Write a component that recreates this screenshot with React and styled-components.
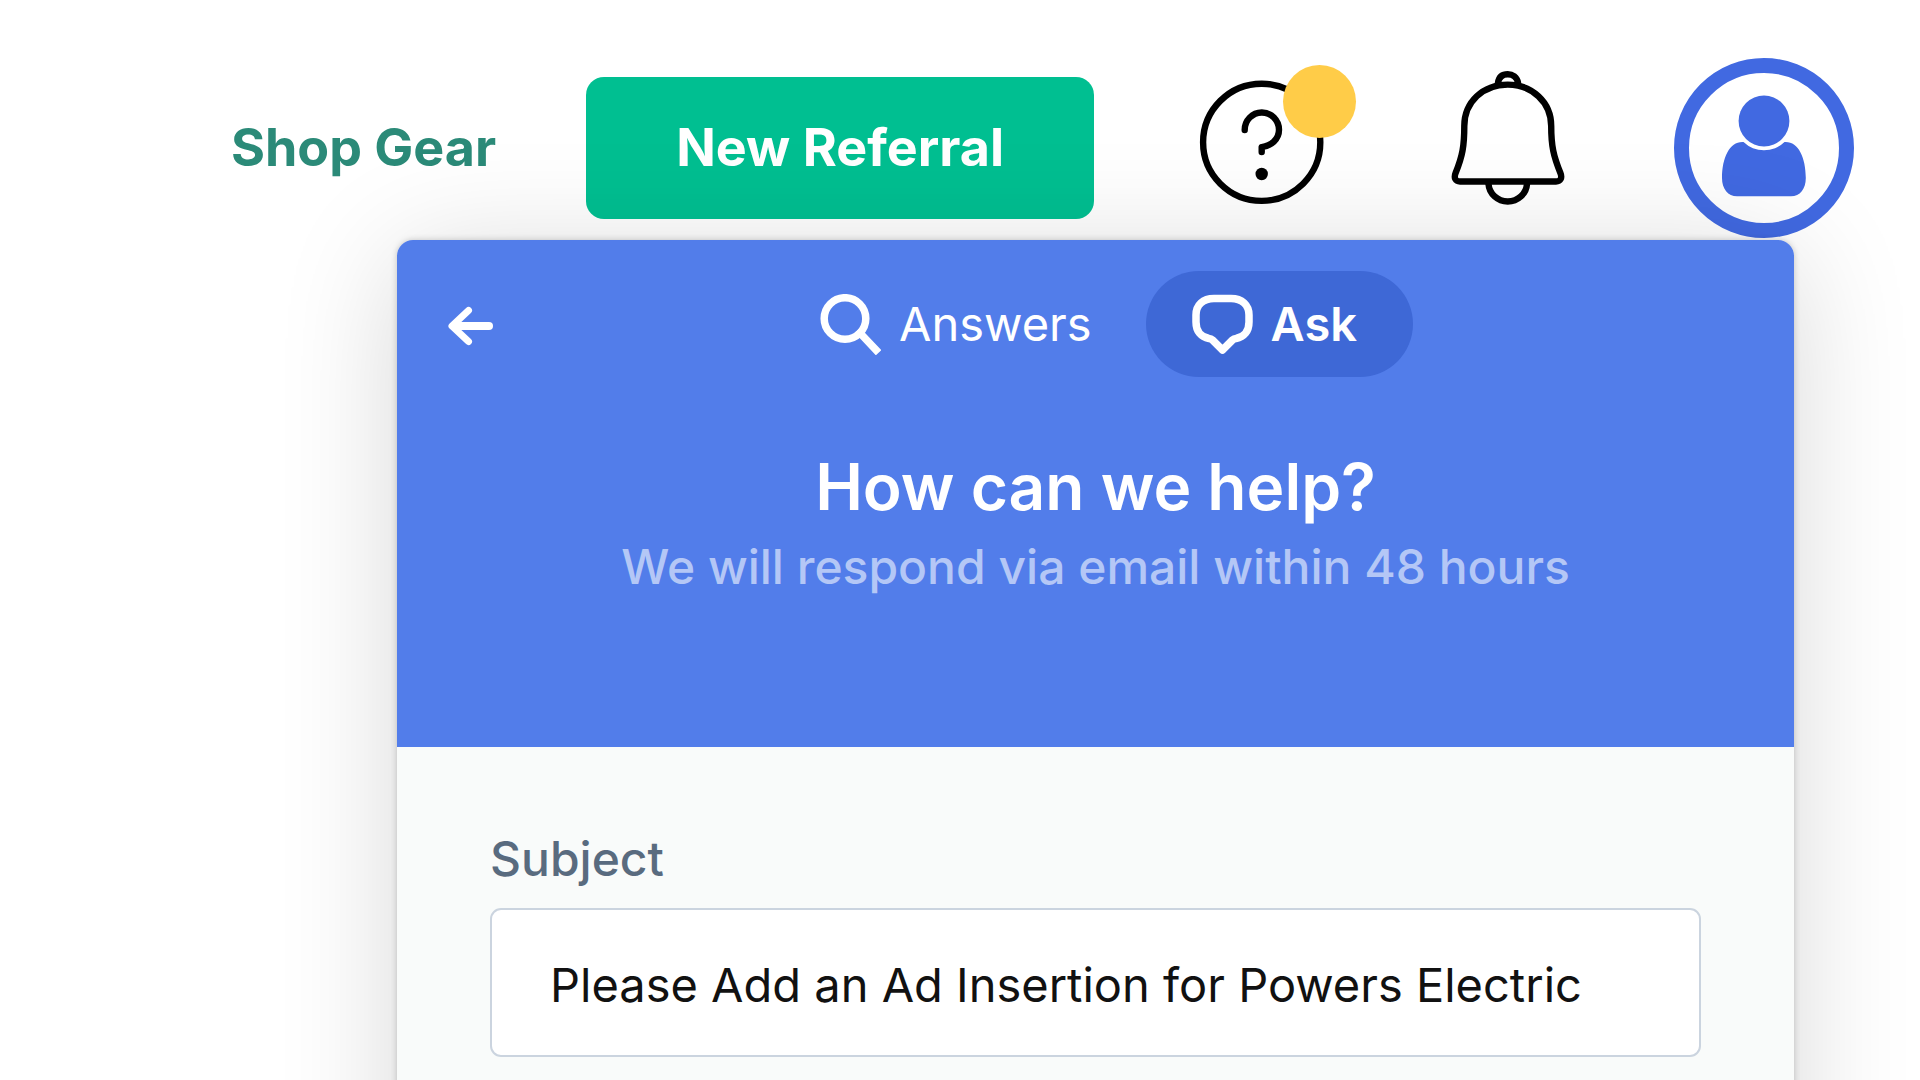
import React, { useState } from "react";
import styled, { createGlobalStyle } from "styled-components";

const GlobalStyle = createGlobalStyle`
  *, *::before, *::after { box-sizing: border-box; }
  body {
    margin: 0;
    background: #fff;
    font-family: Inter, "Liberation Sans", sans-serif;
  }
  button, input { font-family: inherit; }
`;

const Page = styled.div`
  height: 100vh;
  overflow: hidden;
  display: flex;
  flex-direction: column;
`;

const TopBar = styled.header`
  flex: none;
  display: flex;
  justify-content: flex-end;
  align-items: center;
  padding: 58px 66px 2px;
`;

const GearLink = styled.a`
  margin-right: 90px;
  color: #2b8a78;
  font-size: 52px;
  line-height: 64px;
  font-weight: 700;
  text-decoration: none;
  white-space: nowrap;
`;

const ReferralButton = styled.button`
  margin-right: 104px;
  height: 142px;
  padding: 0 90px;
  border: 0;
  border-radius: 18px;
  background: #00bf91;
  color: #fff;
  font-size: 52px;
  line-height: 64px;
  font-weight: 700;
  white-space: nowrap;
`;

const IconButton = styled.button`
  position: relative;
  flex: none;
  display: flex;
  margin-right: ${(p) => p.$after || 0}px;
  padding: 0;
  border: 0;
  background: none;
  color: ${(p) => p.$color || "#000"};
`;

const Badge = styled.span`
  position: absolute;
  top: 7px;
  right: 4px;
  width: 73px;
  height: 73px;
  border-radius: 50%;
  background: #ffcc48;
`;

const Panel = styled.section`
  position: relative;
  z-index: 1;
  flex: none;
  min-height: 100vh;
  margin: 0 126px 0 397px;
  border-radius: 16px;
  background: #f9fbfa;
  box-shadow: 0 0 6px rgba(0, 0, 0, 0.2), 0 16px 120px rgba(0, 0, 0, 0.16);
`;

const PanelHeader = styled.div`
  padding: 31px 48px 151px;
  border-radius: 16px 16px 0 0;
  background: #527dea;
  color: #fff;
  text-align: center;
`;

const NavRow = styled.nav`
  display: grid;
  grid-template-columns: 1fr auto 1fr;
  align-items: center;
`;

const BackButton = styled.button`
  justify-self: start;
  display: flex;
  padding: 0;
  border: 0;
  background: none;
  color: #fff;
`;

const Tabs = styled.div`
  display: flex;
  gap: 8px;
  padding-right: 4px;
`;

const Tab = styled.button`
  display: flex;
  align-items: center;
  gap: 18px;
  height: 106px;
  padding: 0 ${(p) => (p.$active ? 56 : 46)}px 0 46px;
  border: 0;
  border-radius: 53px;
  background: ${(p) => (p.$active ? "#3e68d6" : "transparent")};
  color: #fff;
  font-size: 47px;
  line-height: 58px;
  font-weight: ${(p) => (p.$active ? 600 : 400)};
`;

const Title = styled.h1`
  margin: 70px 0 0;
  font-size: 64px;
  line-height: 80px;
  font-weight: 600;
`;

const Subtitle = styled.p`
  margin: 11px 0 0;
  color: #b4c7f6;
  font-size: 48px;
  line-height: 58px;
  font-weight: 500;
`;

const Form = styled.form`
  display: flex;
  flex-direction: column;
  gap: 20px;
  padding: 83px 93px;
`;

const Label = styled.label`
  color: #596b7f;
  font-size: 48px;
  line-height: 58px;
  font-weight: 500;
`;

const TextInput = styled.input`
  width: 100%;
  height: 149px;
  padding: 4px 58px 0;
  border: 2px solid #cbd4df;
  border-radius: 11px;
  background: #fff;
  color: #111;
  font-size: 47px;
  outline: none;
`;

const HelpIcon = () => (
  <svg width="162" height="180" viewBox="0 0 162 180" fill="none" stroke="currentColor" strokeWidth="6.4" strokeLinecap="round" strokeLinejoin="round" aria-hidden="true">
    <circle cx="63.7" cy="84.3" r="58.6" />
    <path d="M46.7 72A17 17.3 0 0 1 81 71.8C81 81.5 73 87.8 63.7 89.1V94" />
    <circle cx="63.7" cy="116" r="6.2" fill="currentColor" stroke="none" />
  </svg>
);

const BellIcon = () => (
  <svg width="116" height="180" viewBox="0 0 116 180" fill="none" stroke="currentColor" strokeWidth="6.4" strokeLinejoin="round" aria-hidden="true">
    <path d="M57.7 26.6C33 26.6 14.3 44 14.3 68C14.3 88 12.5 98 5.6 115C3.6 120 5.5 123.5 10 123.5H106C110.5 123.5 112.4 120 110.4 115C103.5 98 101.2 88 101.2 68C101.2 44 82 26.6 57.7 26.6Z" />
    <path d="M48 27V24.8C49 18.8 53 16.3 57.7 16.3C62.5 16.3 67 18.8 68 24.8V27" />
    <path d="M38.5 124V126A19.3 18.8 0 0 0 77 126V124" />
  </svg>
);

const AvatarIcon = () => (
  <svg width="180" height="180" viewBox="0 0 180 180" fill="currentColor" aria-hidden="true">
    <circle cx="90" cy="90" r="82.5" fill="none" stroke="currentColor" strokeWidth="15" />
    <circle cx="90" cy="63" r="25.4" />
    <path d="M69.5 84A29.5 29.5 0 0 0 110.5 84C124 83 131.8 99 131.8 120C131.8 131 126 138.3 117 138.3H63C54 138.3 48 131 48 120C48 99 56 83 69.5 84Z" />
  </svg>
);

const ArrowIcon = () => (
  <svg width="52" height="46" viewBox="0 -2 52 46" fill="none" stroke="currentColor" strokeLinecap="round" strokeLinejoin="round" aria-hidden="true">
    <path d="M23.5 7.5L7 23L23.5 38.5" strokeWidth="7" />
    <path d="M10 23H44" strokeWidth="8" />
    <path d="M8 23L13 19V27Z" fill="currentColor" strokeWidth="4" />
  </svg>
);

const SearchIcon = () => (
  <svg width="61" height="61" viewBox="0 1 61 61" fill="none" stroke="currentColor" strokeWidth="7.5" aria-hidden="true">
    <circle cx="25" cy="25.5" r="20.8" />
    <path d="M40 40L56 57" strokeWidth="7.5" strokeLinecap="square" />
  </svg>
);

const ChatIcon = () => (
  <svg width="61" height="61" viewBox="0 0 61 61" fill="none" stroke="currentColor" strokeWidth="7.5" strokeLinejoin="round" aria-hidden="true">
    <path d="M22 4.5H39C50 4.5 57 11 57 21V28C57 37.5 52 43 44 44.5Q42 44.5 40.5 46L30.5 56L20.5 46Q19 44.5 17 44.5C9 43 4 37.5 4 28V21C4 11 11 4.5 22 4.5Z" />
  </svg>
);

export default function App() {
  const [tab, setTab] = useState("ask");
  const [subject, setSubject] = useState("Please Add an Ad Insertion for Powers Electric");

  return (
    <Page>
      <GlobalStyle />
      <TopBar>
        <GearLink href="#shop">Shop Gear</GearLink>
        <ReferralButton type="button">New Referral</ReferralButton>
        <IconButton type="button" aria-label="Help" $after={90}>
          <HelpIcon />
          <Badge />
        </IconButton>
        <IconButton type="button" aria-label="Notifications" $after={108}>
          <BellIcon />
        </IconButton>
        <IconButton type="button" aria-label="Account" $color="#4169e1">
          <AvatarIcon />
        </IconButton>
      </TopBar>
      <Panel>
        <PanelHeader>
          <NavRow>
            <BackButton type="button" aria-label="Back">
              <ArrowIcon />
            </BackButton>
            <Tabs>
              <Tab type="button" $active={tab === "answers"} onClick={() => setTab("answers")}>
                <SearchIcon />
                Answers
              </Tab>
              <Tab type="button" $active={tab === "ask"} onClick={() => setTab("ask")}>
                <ChatIcon />
                Ask
              </Tab>
            </Tabs>
          </NavRow>
          <Title>How can we help?</Title>
          <Subtitle>We will respond via email within 48 hours</Subtitle>
        </PanelHeader>
        <Form onSubmit={(e) => e.preventDefault()}>
          <Label htmlFor="subject">Subject</Label>
          <TextInput
            id="subject"
            type="text"
            value={subject}
            onChange={(e) => setSubject(e.target.value)}
          />
        </Form>
      </Panel>
    </Page>
  );
}
